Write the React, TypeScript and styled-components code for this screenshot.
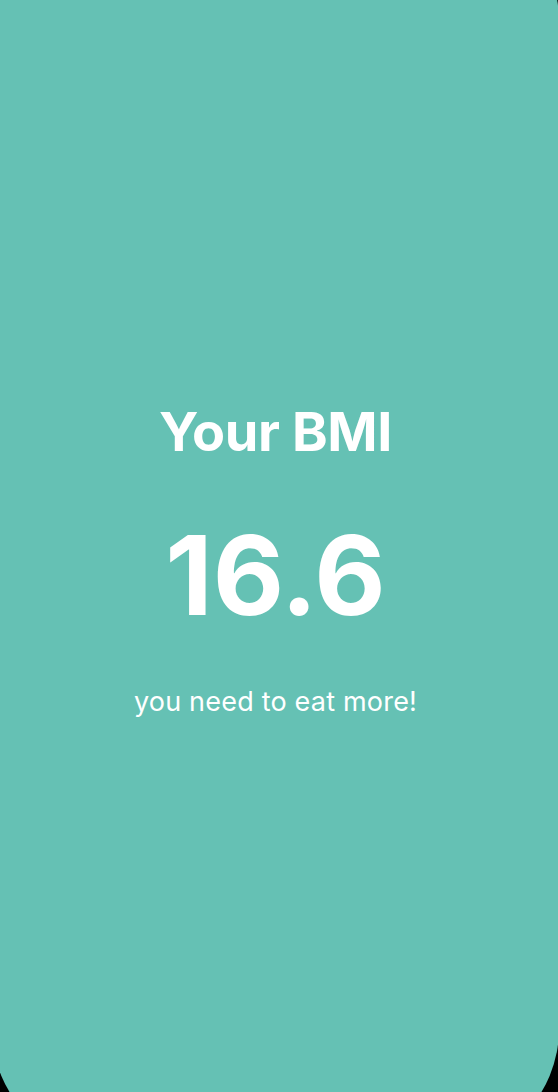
import React from "react";
import styled, { createGlobalStyle } from "styled-components";

const GlobalStyle = createGlobalStyle`
  html, body {
    margin: 0;
    padding: 0;
    background: #000;
    height: 1092px;
    overflow: hidden;
  }
  body {
    font-family: Inter, "Noto Sans", "Liberation Sans", sans-serif;
    -webkit-font-smoothing: antialiased;
  }
`;

const Viewport = styled.div`
  height: 1092px;
  overflow: hidden;
  background: #000;
`;

const Screen = styled.main`
  box-sizing: border-box;
  margin: -101px 0 0 -8px;
  width: 567px;
  height: 1252px;
  border-radius: 122px;
  background: #65c1b4;
  color: #fff;
  display: flex;
  flex-direction: column;
  align-items: center;
  padding-top: 506px;
`;

const Title = styled.h1`
  margin: 0;
  font-size: 54px;
  line-height: 1;
  font-weight: 700;
  letter-spacing: -0.4px;
`;

const Value = styled.div`
  margin-top: 61px;
  font-size: 110px;
  line-height: 1;
  font-weight: 700;
  letter-spacing: 0;
`;

const Message = styled.p`
  margin: 58px 0 0;
  font-size: 27px;
  line-height: 1;
  font-weight: 400;
  letter-spacing: 0.2px;
`;

export default function App() {
  return (
    <>
      <GlobalStyle />
      <Viewport>
        <Screen>
          <Title>Your BMI</Title>
          <Value>16.6</Value>
          <Message>you need to eat more!</Message>
        </Screen>
      </Viewport>
    </>
  );
}
